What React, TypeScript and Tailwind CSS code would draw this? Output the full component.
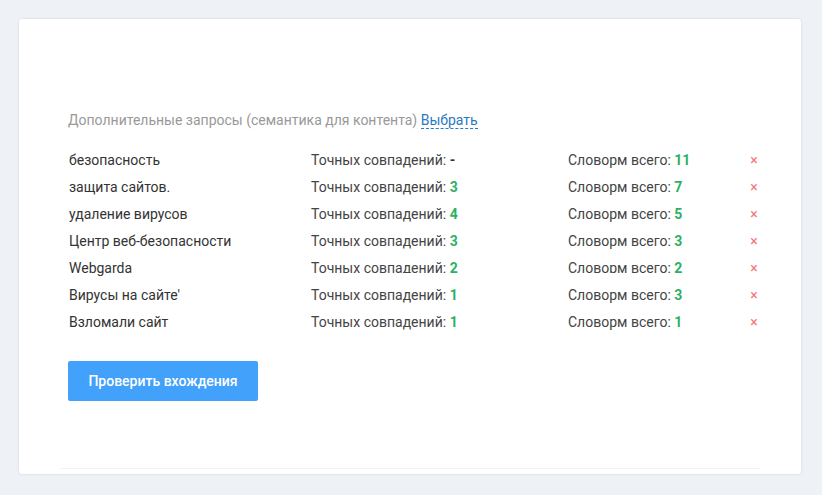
import React from "react";

type Row = { query: string; exact: string; forms: string; clip?: boolean };

const rows: Row[] = [
  { query: "безопасность", exact: "-", forms: "11" },
  { query: "защита сайтов.", exact: "3", forms: "7" },
  { query: "удаление вирусов", exact: "4", forms: "5" },
  { query: "Центр веб-безопасности", exact: "3", forms: "3" },
  { query: "Webgarda", exact: "2", forms: "2", clip: true },
  { query: "Вирусы на сайте'", exact: "1", forms: "3" },
  { query: "Взломали сайт", exact: "1", forms: "1" },
];

function QueryRow({ row }: { row: Row }) {
  // row 5 gets cut at the bottom in the original, keep that
  const clip = row.clip ? "self-start mt-[3.5px] h-[15px] overflow-hidden" : "";
  return (
    <div className="flex items-center h-[27px] text-[14px] leading-[20px] text-[#333]">
      <div className="w-[243px] pl-px">{row.query}</div>
      <div className={`w-[257px] text-[#444] ${clip}`}>
        Точных совпадений:{" "}
        <span className={row.exact === "-" ? "font-bold text-[#333]" : "font-bold text-[#2eb062]"}>{row.exact}</span>
      </div>
      <div className={`w-[179px] text-[#444] ${clip}`}>
        Словорм всего: <span className="font-bold text-[#2eb062]">{row.forms}</span>
      </div>
      <button className="w-[14px] text-[#f27777] text-[14px] leading-none">×</button>
    </div>
  );
}

export default function App() {
  return (
    <div className="min-h-[495px] bg-[#eef1f6] p-[19px] pr-[21px] font-['Roboto',sans-serif]">
      <div className="bg-white rounded-[3px] shadow-[0_0_3px_rgba(0,0,0,0.12)] h-[455px] flex flex-col">
        <div className="pt-[91px] pl-[49px] flex-1">
          <div className="text-[14px] leading-[20px] text-[#999]">
            Дополнительные запросы (семантика для контента){" "}
            <a className="text-[#2a7ac0] border-b border-dashed border-[#2a7ac0] cursor-pointer">Выбрать</a>
          </div>
          <div className="mt-[16px]">
            {rows.map((r) => (
              <QueryRow key={r.query} row={r} />
            ))}
          </div>
          <button className="mt-[26px] w-[190px] h-[40px] rounded-[2px] bg-[#42a1fa] text-white text-[14px] font-medium">
            Проверить вхождения
          </button>
        </div>
        <div className="mx-[41px] mb-[5px] h-px bg-[#f2f2f2]" />
      </div>
    </div>
  );
}
